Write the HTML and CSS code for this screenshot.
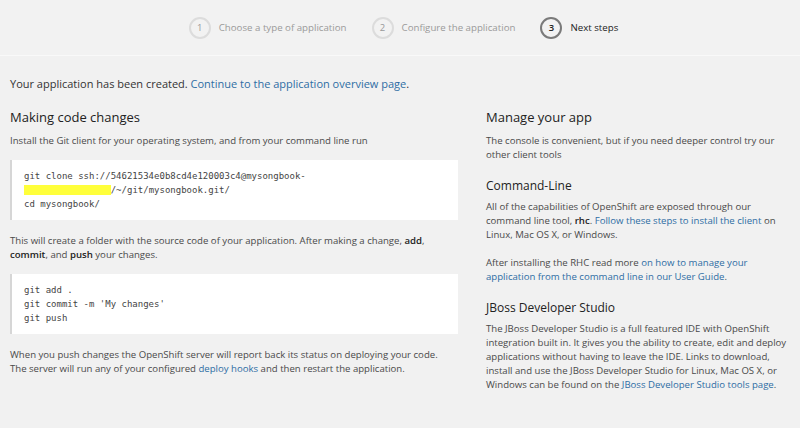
FILE: index.html
```html
<!DOCTYPE html>
<html>
<head>
<meta charset="utf-8">
<link rel="stylesheet" href="styles.css">
</head>
<body>
<div class="steps">
  <div class="step"><span class="num">1</span><span class="label">Choose a type of application</span></div>
  <div class="step"><span class="num">2</span><span class="label">Configure the application</span></div>
  <div class="step active"><span class="num">3</span><span class="label">Next steps</span></div>
</div>
<div class="content">
  <p class="created">Your application has been created. <a href="#">Continue to the application overview page</a>.</p>
  <div class="cols">
    <div class="left">
      <h2>Making code changes</h2>
      <p class="intro">Install the Git client for your operating system, and from your command line run</p>
      <pre class="code">git clone ssh://54621534e0b8cd4e120003c4@mysongbook-
<span class="hl">xxxxxxxxxxxxxxxx</span>/~/git/mysongbook.git/
cd mysongbook/</pre>
      <p class="intro">This will create a folder with the source code of your application. After making a change, <b>add</b>, <b>commit</b>, and <b>push</b> your changes.</p>
      <pre class="code">git add .
git commit -m 'My changes'
git push</pre>
      <p>When you push changes the OpenShift server will report back its status on deploying your code. The server will run any of your configured <a href="#">deploy hooks</a> and then restart the application.</p>
    </div>
    <div class="right">
      <h2>Manage your app</h2>
      <p>The console is convenient, but if you need deeper control try our other client tools</p>
      <h3>Command-Line</h3>
      <p>All of the capabilities of OpenShift are exposed through our command line tool, <b>rhc</b>. <a href="#">Follow these steps to install the client</a> on Linux, Mac OS X, or Windows.</p>
      <p>After installing the RHC read more <a href="#">on how to manage your application from the command line in our User Guide</a>.</p>
      <h3>JBoss Developer Studio</h3>
      <p>The JBoss Developer Studio is a full featured IDE with OpenShift integration built in. It gives you the ability to create, edit and deploy applications without having to leave the IDE. Links to download, install and use the JBoss Developer Studio for Linux, Mac OS X, or Windows can be found on the <a href="#">JBoss Developer Studio tools page</a>.</p>
    </div>
  </div>
</div>
</body>
</html>
```
FILE: styles.css
```css
html, body {
  margin: 0;
  padding: 0;
  background: #f1f1f1;
  font-family: "Open Sans", "Liberation Sans", sans-serif;
  color: #4a4a4a;
}
.steps {
  height: 55px;
  border-bottom: 1px solid #f9f9f9;
  background: #f2f2f2;
  display: flex;
  align-items: center;
  justify-content: center;
  gap: 25px;
  padding-left: 7px;
}
.step {
  display: flex;
  align-items: center;
  gap: 8px;
  font-size: 9.7px;
  color: #9a9a9a;
}
.num {
  width: 18px;
  height: 18px;
  border: 2px solid #dcdcdc;
  border-radius: 50%;
  display: flex;
  align-items: center;
  justify-content: center;
  font-size: 9.5px;
  color: #999;
}
.step.active { color: #222; }
.step.active .num { border-color: #7a7a7a; color: #222; font-weight: 600; }
.content { padding: 20px 10px 0 10px; }
.created {
  margin: 0 0 16px 0;
  font-size: 11px;
  line-height: 16px;
  color: #333;
}
a { color: #2e6da4; text-decoration: none; }
.cols {
  display: grid;
  grid-template-columns: 448px 1fr;
  column-gap: 28px;
}
h2 {
  font-size: 13px;
  font-weight: 400;
  color: #222;
  margin: 0 0 8px 0;
  line-height: 18px;
}
h3 {
  font-size: 12px;
  font-weight: 400;
  color: #222;
  margin: 0 0 4px 0;
  line-height: 20px;
}
p {
  font-size: 9.6px;
  line-height: 14px;
  margin: 0 0 14px 0;
}
.left p { padding-right: 8px; }
p.intro { margin-bottom: 12px; }
b { color: #222; font-weight: 600; }
.code {
  background: #fff;
  border-left: 2px solid #d6d6d6;
  margin: 0 0 14px 0;
  padding: 9px 12px;
  font-family: "DejaVu Sans Mono", "Liberation Mono", monospace;
  font-size: 9px;
  line-height: 14px;
  color: #444;
}
.hl { background: #ffff3b; color: #ffff3b; }
```
